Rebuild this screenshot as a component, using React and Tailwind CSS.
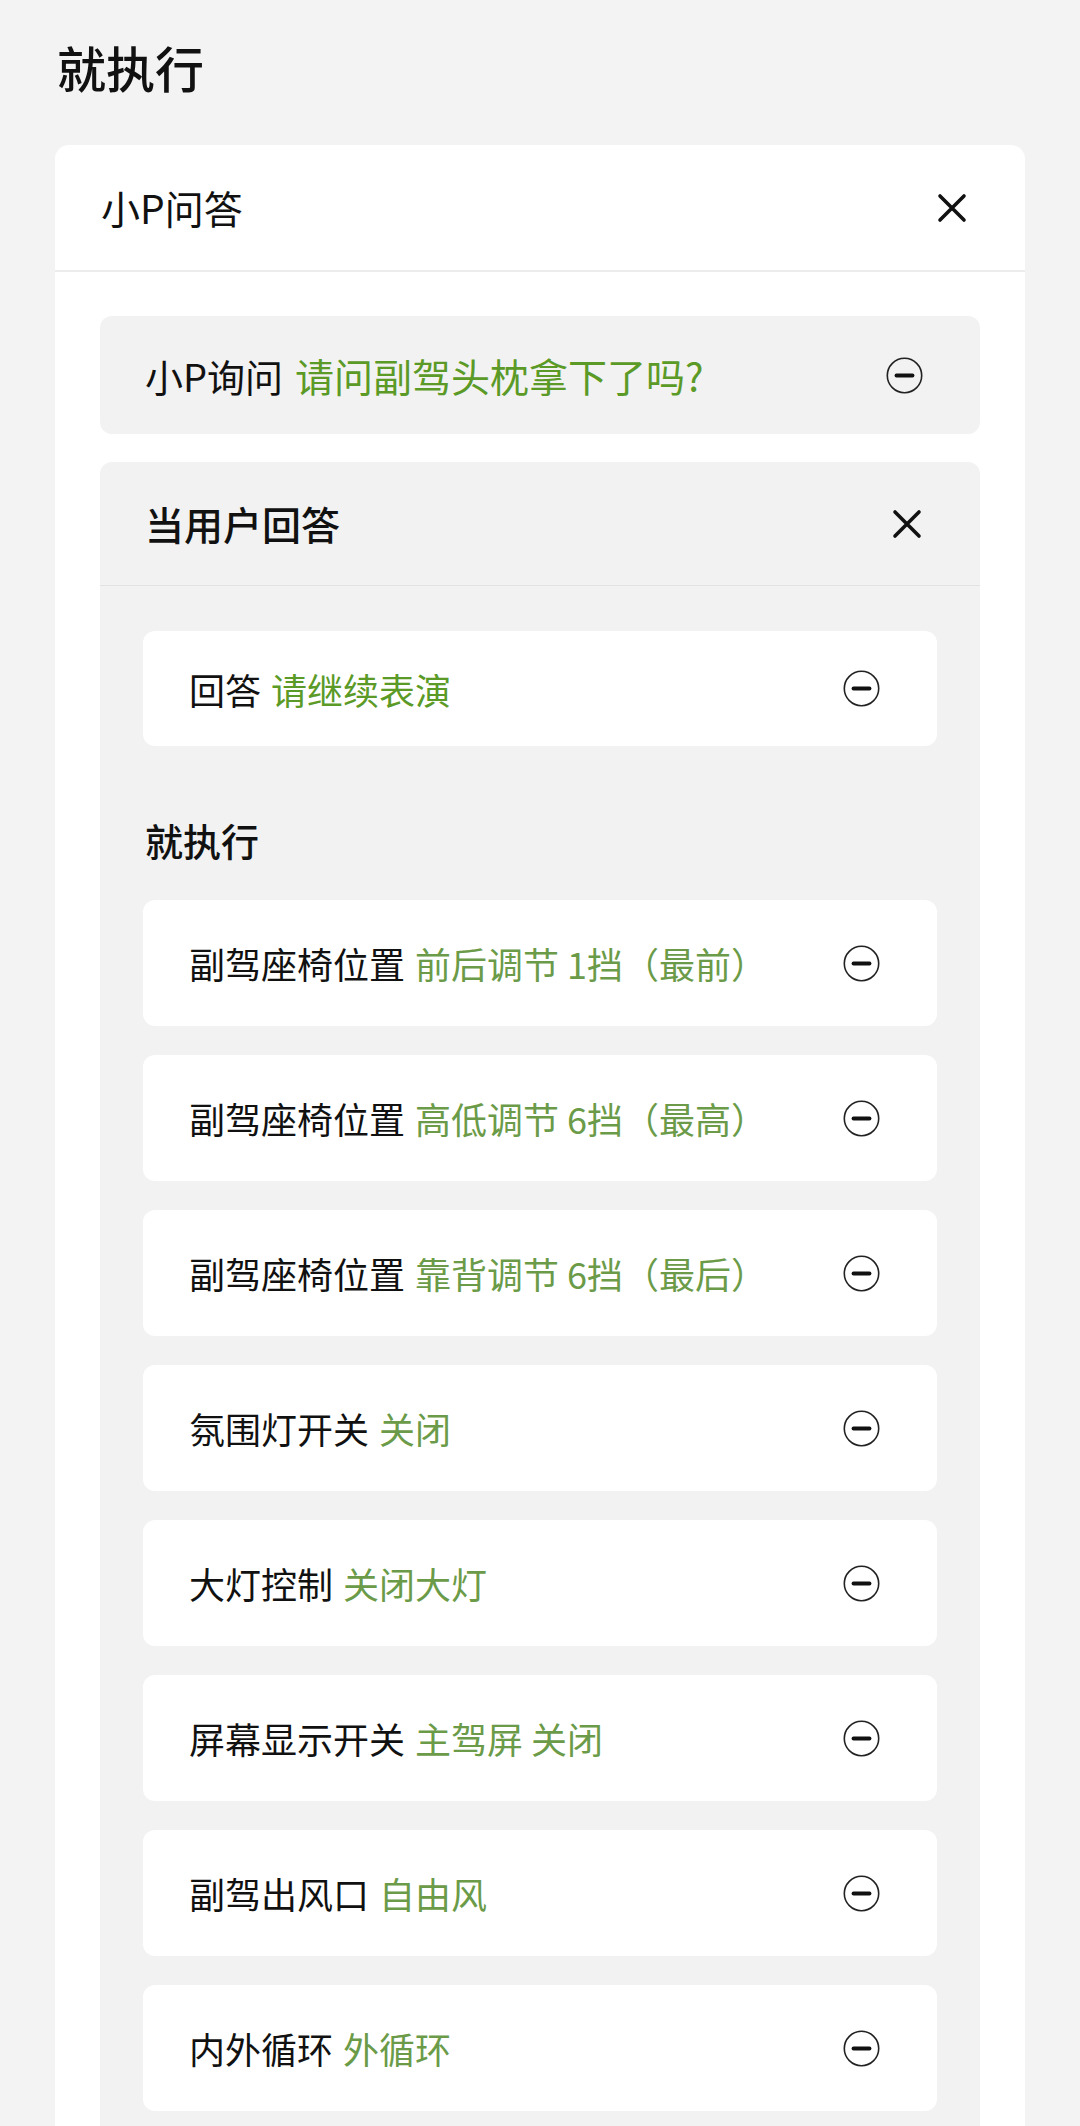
import React from 'react';

const font = { fontFamily: '"Noto Sans CJK SC", "Noto Sans", sans-serif' };

const CloseIcon = () => (
  <svg width="32" height="32" viewBox="0 0 32 32" className="shrink-0">
    <path d="M4 4 L28 28 M28 4 L4 28" stroke="#111" strokeWidth="3.6" strokeLinecap="round" fill="none" />
  </svg>
);

const MinusCircle = () => (
  <svg width="37" height="37" viewBox="0 0 37 37" className="shrink-0">
    <circle cx="18.5" cy="18.5" r="17.2" stroke="#222" strokeWidth="1.6" fill="none" />
    <path d="M10.5 18.5 H26.5" stroke="#111" strokeWidth="3.8" strokeLinecap="round" />
  </svg>
);

const actions = [
  ['副驾座椅位置', '前后调节 1挡（最前）'],
  ['副驾座椅位置', '高低调节 6挡（最高）'],
  ['副驾座椅位置', '靠背调节 6挡（最后）'],
  ['氛围灯开关', '关闭'],
  ['大灯控制', '关闭大灯'],
  ['屏幕显示开关', '主驾屏 关闭'],
  ['副驾出风口', '自由风'],
  ['内外循环', '外循环'],
];

const ActionRow = ({ label, value }) => (
  <div className="h-[126px] rounded-[12px] bg-white pl-[46px] pr-[57px] flex items-center justify-between">
    <div className="text-[36px] leading-none text-[#111]">
      {label}
      <span className="ml-[10px] text-[#6b9b48]">{value}</span>
    </div>
    <MinusCircle />
  </div>
);

export default function App() {
  return (
    <div className="min-h-screen bg-[#f3f3f3] pb-[60px]" style={font}>
      <div className="h-[145px] pt-[42px] pl-[57px]">
        <h1 className="text-[49px] leading-[50px] font-medium text-[#111]">就执行</h1>
      </div>

      <div className="mx-[55px] rounded-[14px] bg-white">
        {/* header */}
        <div className="h-[127px] pl-[46px] pr-[57px] flex items-center justify-between border-b-2 border-[#ececec]">
          <span className="text-[39px] leading-none text-[#111]">小P问答</span>
          <CloseIcon />
        </div>

        <div className="px-[45px] pt-[44px]">
          {/* question */}
          <div className="h-[118px] rounded-[12px] bg-[#f2f2f2] pl-[45px] pr-[57px] flex items-center justify-between">
            <div className="text-[38px] leading-none text-[#111]">
              小P询问
              <span className="ml-[12px] text-[39px] text-[#5b9a26]">请问副驾头枕拿下了吗?</span>
            </div>
            <MinusCircle />
          </div>

          {/* user answer */}
          <div className="mt-[28px] rounded-t-[12px] bg-[#f2f2f2]">
            <div className="h-[124px] pl-[45px] pr-[57px] flex items-center justify-between border-b border-[#e2e2e2]">
              <span className="text-[39px] leading-none font-medium text-[#111]">当用户回答</span>
              <CloseIcon />
            </div>

            <div className="px-[43px] pt-[45px] pb-[40px]">
              <div className="h-[115px] rounded-[12px] bg-white pl-[46px] pr-[57px] flex items-center justify-between">
                <div className="text-[36px] leading-none text-[#111]">
                  回答
                  <span className="ml-[10px] text-[#5b9a26]">请继续表演</span>
                </div>
                <MinusCircle />
              </div>

              <div className="mt-[75px] mb-[41px] pl-[2px] text-[38px] leading-[38px] font-medium text-[#111]">就执行</div>

              <div className="flex flex-col gap-[29px]">
                {actions.map(([label, value], i) => (
                  <ActionRow key={i} label={label} value={value} />
                ))}
              </div>
            </div>
          </div>
        </div>
      </div>
    </div>
  );
}
